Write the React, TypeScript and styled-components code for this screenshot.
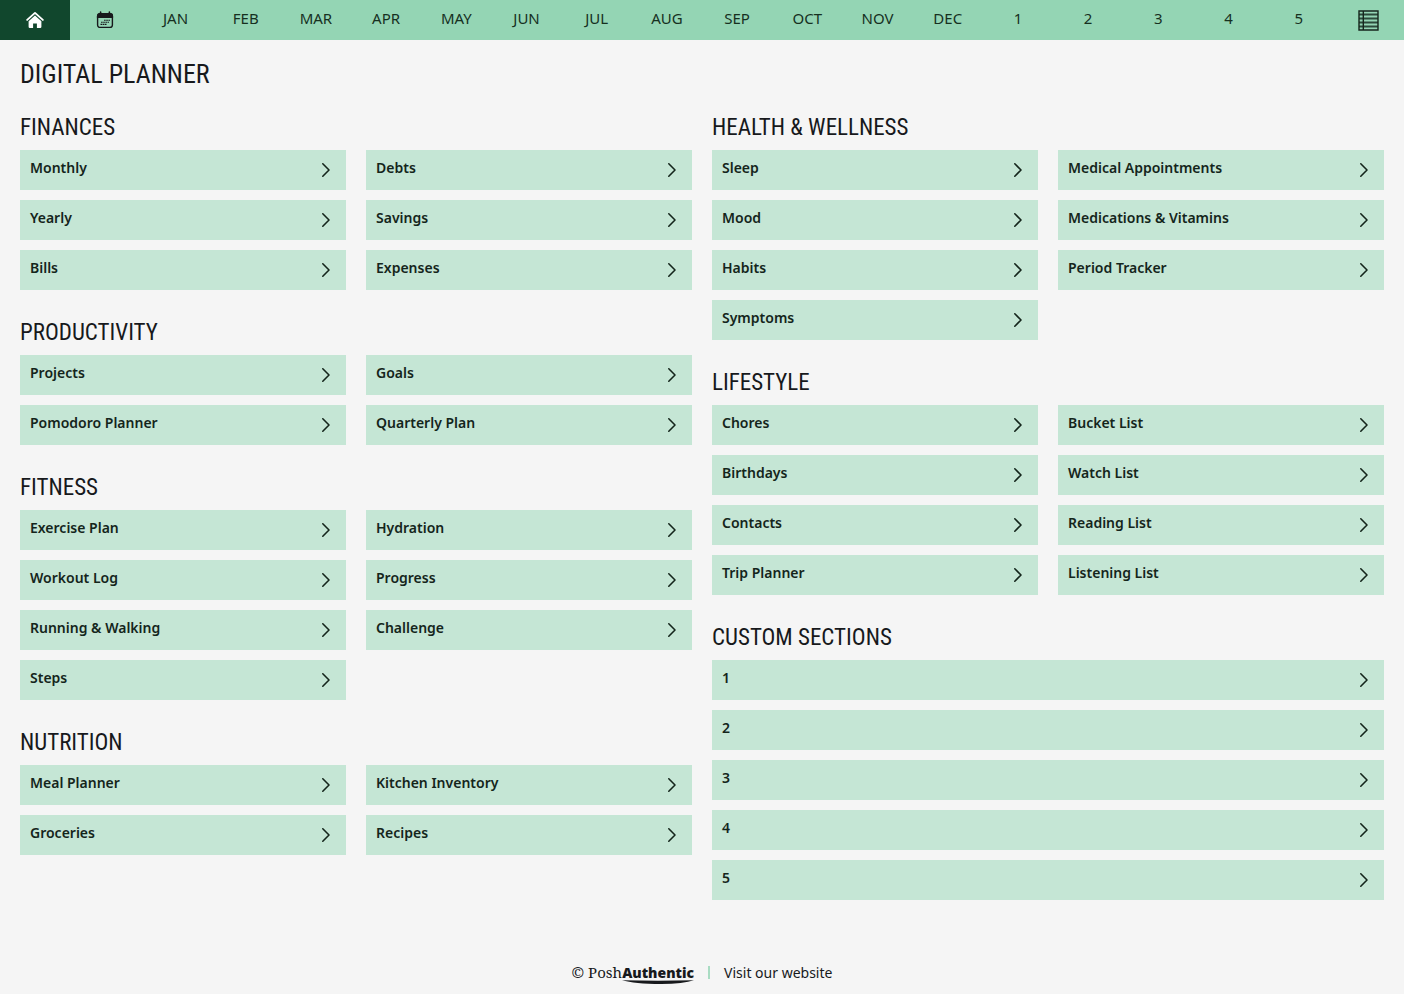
import React from "react";
import styled, { createGlobalStyle } from "styled-components";

const GlobalStyle = createGlobalStyle`
  *, *::before, *::after { box-sizing: border-box; }
  body {
    margin: 0;
    background: #f5f5f5;
    color: #17191c;
    font-family: "Noto Sans", "Open Sans", sans-serif;
    font-size: 14px;
  }
  a { color: inherit; text-decoration: none; }
  h1, h2, p { margin: 0; }
`;

const Page = styled.div`
  display: flex;
  flex-direction: column;
  min-height: 100vh;
`;

const TopNav = styled.nav`
  display: flex;
  height: 40px;
  background: #94d5b4;
`;

const NavLink = styled.a<{ $active?: boolean; $icon?: boolean }>`
  flex: 1 1 0;
  display: flex;
  align-items: center;
  justify-content: center;
  padding-bottom: ${(p) => (p.$icon ? "0" : "4px")};
  background: ${(p) => (p.$active ? "#11472d" : "transparent")};
  color: ${(p) => (p.$active ? "#ffffff" : "#16301f")};
  font-size: 15px;
`;

const Main = styled.main`
  flex: 1;
  padding: 16px 20px 32px;
`;

const Title = styled.h1`
  font-family: "Roboto Condensed", "Liberation Sans Narrow", sans-serif;
  font-size: 26px;
  line-height: 36px;
  font-weight: 400;
`;

const Columns = styled.div`
  display: grid;
  grid-template-columns: 1fr 1fr;
  gap: 20px;
  margin-top: 18px;
`;

const Column = styled.div`
  display: flex;
  flex-direction: column;
  gap: 25px;
`;

const SectionTitle = styled.h2`
  height: 40px;
  padding-top: 2px;
  font-family: "Roboto Condensed", "Liberation Sans Narrow", sans-serif;
  font-size: 23px;
  line-height: 32px;
  font-weight: 400;
`;

const Tiles = styled.div<{ $single?: boolean }>`
  display: grid;
  grid-template-columns: ${(p) => (p.$single ? "1fr" : "1fr 1fr")};
  gap: 10px 20px;
`;

const Tile = styled.a`
  display: flex;
  align-items: center;
  justify-content: space-between;
  height: 40px;
  padding: 0 15px 0 10px;
  background: #c5e6d5;
  color: #14251b;
  font-weight: 600;
`;

const TileLabel = styled.span`
  padding-bottom: 5px;
`;

const Footer = styled.footer`
  display: flex;
  align-items: center;
  justify-content: center;
  gap: 14px;
  height: 42px;
  padding-bottom: 2px;
`;

const Brand = styled.a`
  display: flex;
  align-items: baseline;
  font-family: "Noto Serif", "Liberation Serif", serif;
  font-size: 15px;
  line-height: 20px;
`;

const BrandStrong = styled.span`
  position: relative;
  font-family: "Open Sans", sans-serif;
  font-size: 14px;
  font-weight: 800;
`;

const Swoosh = styled.svg`
  position: absolute;
  left: 0;
  bottom: -1px;
  width: 100%;
  height: 4px;
`;

const Divider = styled.span`
  width: 2px;
  height: 13px;
  background: #a9dcc3;
`;

const HomeIcon = () => (
  <svg width="18" height="18" viewBox="0 0 18 18" fill="none" aria-hidden="true">
    <path d="M1.2 8.9 9 1.9l7.8 7" stroke="#fff" strokeWidth="1.9" strokeLinecap="round" strokeLinejoin="round" />
    <path d="M2.6 10.2 9 4.5l6.4 5.7v5.6a1.2 1.2 0 0 1-1.2 1.2h-3.3v-4.4H7.1V17H3.8a1.2 1.2 0 0 1-1.2-1.2z" fill="#fff" />
  </svg>
);

const CalendarIcon = () => (
  <svg width="18" height="18" viewBox="0 0 18 18" fill="none" aria-hidden="true">
    <rect x="1.6" y="2.8" width="14.8" height="13.6" rx="2.4" stroke="#17191c" strokeWidth="1.4" />
    <path d="M.9 6.9V5a3 3 0 0 1 3-3h10.2a3 3 0 0 1 3 3v1.9z" fill="#17191c" />
    <path d="M4.6 1v2M13.4 1v2" stroke="#17191c" strokeWidth="1.6" strokeLinecap="round" />
    <path d="M8 9.2H14M5 11.3h8M4.5 13.4H10.5" stroke="#17191c" strokeWidth="1.1" strokeDasharray="1.7 .5" />
  </svg>
);

const IndexIcon = () => (
  <svg width="21" height="21" viewBox="0 0 21 21" fill="none" stroke="#16251c" aria-hidden="true">
    <path d="M1 4.5h19M1 8.5h19M1 12.5h19M1 16.5h19" stroke="#2c4a3b" strokeWidth="1.9" />
    <path d="M1 1h19v19H1zM5.3 1v19" strokeWidth="1.4" />
  </svg>
);

const Chevron = () => (
  <svg width="10" height="16" viewBox="0 0 10 16" fill="none" aria-hidden="true">
    <path d="M1.8 1.8 8 8l-6.2 6.2" stroke="#14251b" strokeWidth="1.6" strokeLinecap="round" strokeLinejoin="round" />
  </svg>
);

type SectionData = { title: string; items: string[]; single?: boolean };

const tabs = [
  "JAN", "FEB", "MAR", "APR", "MAY", "JUN", "JUL", "AUG", "SEP",
  "OCT", "NOV", "DEC", "1", "2", "3", "4", "5",
];

const leftSections: SectionData[] = [
  { title: "FINANCES", items: ["Monthly", "Debts", "Yearly", "Savings", "Bills", "Expenses"] },
  { title: "PRODUCTIVITY", items: ["Projects", "Goals", "Pomodoro Planner", "Quarterly Plan"] },
  {
    title: "FITNESS",
    items: ["Exercise Plan", "Hydration", "Workout Log", "Progress", "Running & Walking", "Challenge", "Steps"],
  },
  { title: "NUTRITION", items: ["Meal Planner", "Kitchen Inventory", "Groceries", "Recipes"] },
];

const rightSections: SectionData[] = [
  {
    title: "HEALTH & WELLNESS",
    items: ["Sleep", "Medical Appointments", "Mood", "Medications & Vitamins", "Habits", "Period Tracker", "Symptoms"],
  },
  {
    title: "LIFESTYLE",
    items: [
      "Chores", "Bucket List", "Birthdays", "Watch List",
      "Contacts", "Reading List", "Trip Planner", "Listening List",
    ],
  },
  { title: "CUSTOM SECTIONS", items: ["1", "2", "3", "4", "5"], single: true },
];

const Section = ({ title, items, single }: SectionData) => (
  <section>
    <SectionTitle>{title}</SectionTitle>
    <Tiles $single={single}>
      {items.map((item) => (
        <Tile key={item} href="#">
          <TileLabel>{item}</TileLabel>
          <Chevron />
        </Tile>
      ))}
    </Tiles>
  </section>
);

export default function App() {
  return (
    <Page>
      <GlobalStyle />
      <TopNav>
        <NavLink href="#" $active $icon aria-label="Home"><HomeIcon /></NavLink>
        <NavLink href="#" $icon aria-label="Calendar"><CalendarIcon /></NavLink>
        {tabs.map((tab) => (
          <NavLink key={tab} href="#">{tab}</NavLink>
        ))}
        <NavLink href="#" $icon aria-label="Index"><IndexIcon /></NavLink>
      </TopNav>
      <Main>
        <Title>DIGITAL PLANNER</Title>
        <Columns>
          <Column>{leftSections.map((s) => <Section key={s.title} {...s} />)}</Column>
          <Column>{rightSections.map((s) => <Section key={s.title} {...s} />)}</Column>
        </Columns>
      </Main>
      <Footer>
        <Brand href="#">
          ©&nbsp;Posh
          <BrandStrong>
            Authentic
            <Swoosh viewBox="0 0 70 4" preserveAspectRatio="none" aria-hidden="true">
              <path d="M0 .3Q35 1.2 70 .3 60 4 38 4 12 4 0 .3z" fill="#17191c" />
            </Swoosh>
          </BrandStrong>
        </Brand>
        <Divider />
        <a href="#">Visit our website</a>
      </Footer>
    </Page>
  );
}
